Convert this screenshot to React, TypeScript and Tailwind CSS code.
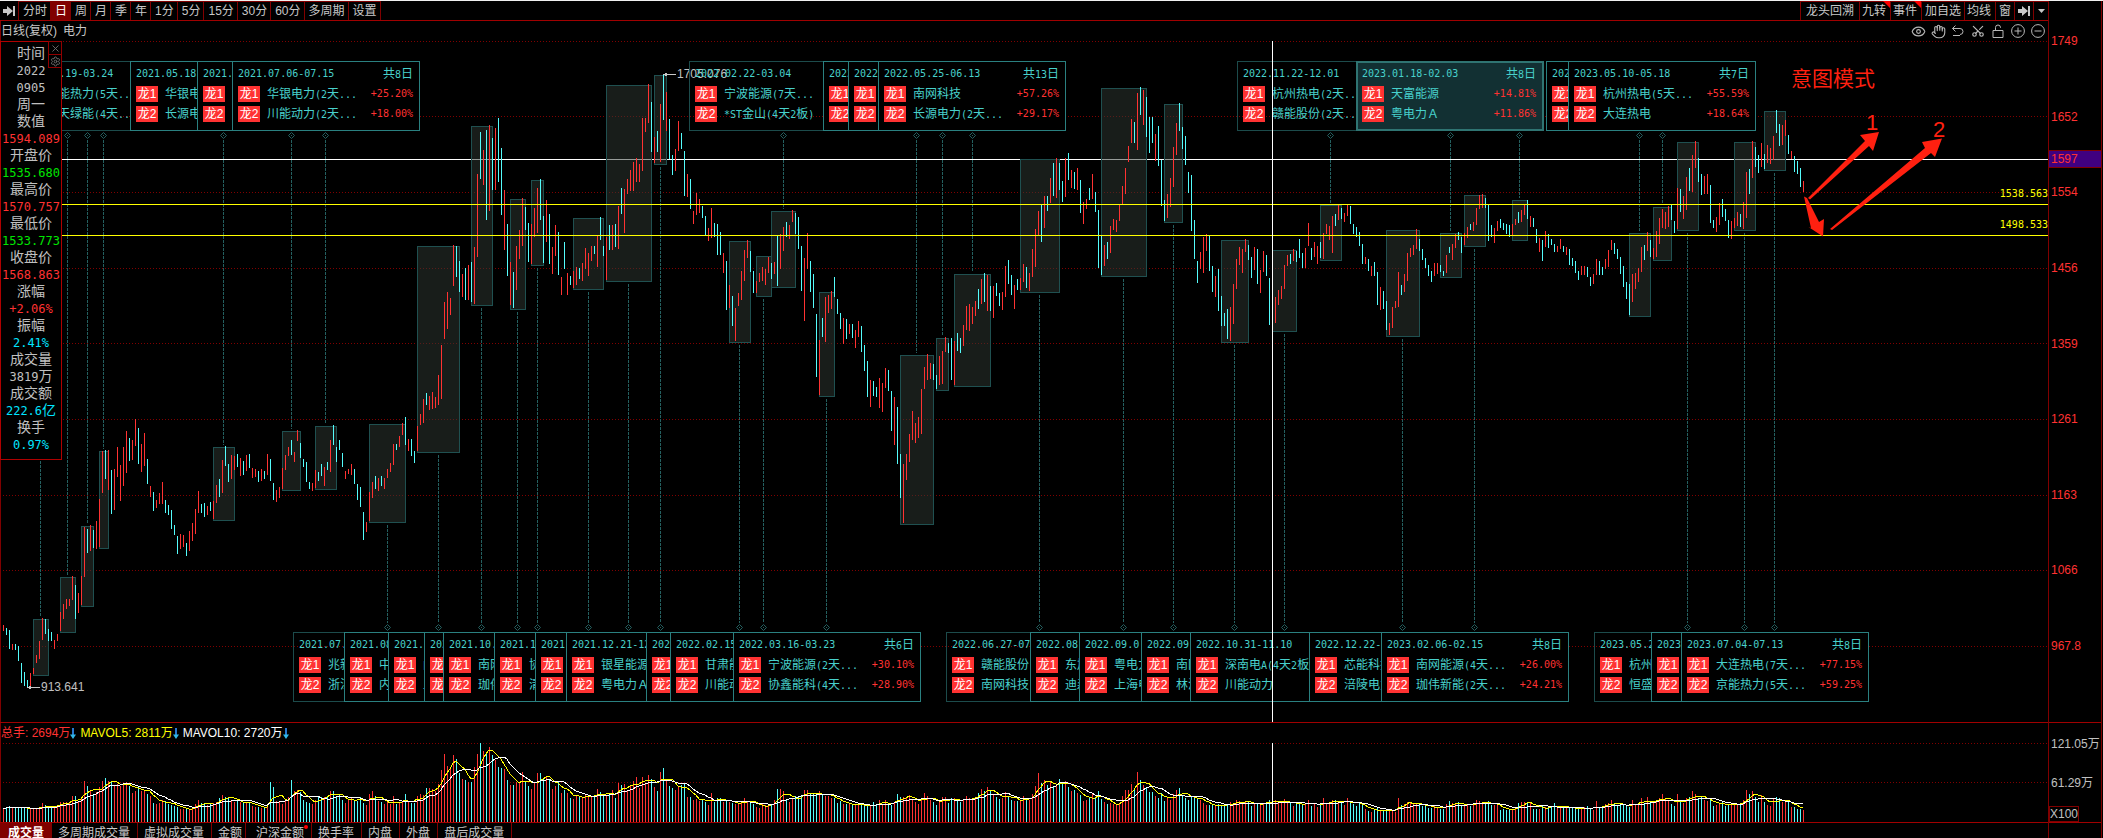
import { Eye, Hand, Scissors, X, Settings } from "lucide-react";

const RED = "#ff3232";
const CYAN = "#54fcfc";
const GRID = "#800000";
const TEAL = "#246060";

/* Vertical extent of each daily bar: r = up day, c = down day, then high-low. */
const BARS = `
r625-631 c628-635 c630-649 r644-650 c644-650 c646-661 c663-683 c672-686 c680-688 r673-687
r668-674 r655-663 r641-659 r618-640 c619-634 c629-641 c632-641 r640-649 r634-641 r612-631
r604-619 r599-609 r599-606 r576-600 c585-619 r593-613 r576-605 r527-577 c529-553 r525-551
c530-548 r521-549 r499-547 r451-493 c450-479 r450-490 c470-514 r469-510 r447-477 r465-501
r447-486 r431-473 c438-461 r440-460 r419-446 c428-464 r444-472 r433-466 c459-484 r486-497
c492-511 r500-508 r493-504 r482-504 c500-513 c505-515 c510-529 c525-535 c536-554 r534-549
r535-547 c543-556 r531-551 r523-541 r509-534 r491-513 c504-513 c503-517 r506-515 c502-511
r501-519 r485-503 c479-497 r460-493 c446-466 c464-482 r455-479 r456-470 c454-467 r458-476
c461-475 r455-471 c454-468 r468-478 r469-477 c471-482 r469-481 c471-479 r454-475 c459-481
c483-500 r490-502 r487-498 r468-489 r455-470 r447-456 c440-455 r452-462 r430-441 c443-458
c459-467 c462-482 c482-489 r483-491 r470-488 c472-481 c464-476 r467-486 c462-470 r440-472
c425-445 c447-462 c440-450 c453-467 r471-479 r469-474 r464-475 c469-484 c484-500 c487-507
c512-540 r522-532 r492-521 r482-498 c476-489 r478-491 c476-486 r478-489 r469-478 r463-472
r444-465 c444-450 r436-447 r423-435 c417-445 r439-451 c439-456 c451-463 r426-451 r414-425
r399-423 c393-405 r396-410 r392-409 r397-408 r375-405 r345-399 r302-339 r292-329 r298-315
r245-286 c246-277 c261-292 r274-297 c268-300 r265-300 c262-302 r247-304 r174-257 c132-179
r150-185 c130-220 r125-211 c138-190 r128-190 c118-182 c148-215 r190-250 c224-276 r262-305
c272-308 r246-290 r230-259 r198-246 c207-230 c223-262 r224-264 r208-237 r188-233 c179-220
c216-263 r200-242 c214-264 r247-274 r225-256 c232-275 r277-295 c242-269 r273-295 c276-285
r271-288 r267-285 c268-279 r263-281 r248-269 r253-276 r246-261 c246-254 r236-267 c217-240
c246-256 r237-280 c225-250 r225-250 c224-247 r206-249 c188-214 r189-233 r179-194 r170-191
r162-191 r158-182 r164-182 r118-171 r118-132 r84-123 c102-152 r137-163 c131-152 r104-162
c75-120 r92-131 c119-159 c155-175 r149-171 r121-151 c133-149 c151-196 r174-197 c179-209
r211-224 r193-215 r199-213 c206-218 c216-235 r228-241 r208-238 c223-237 c224-255 c232-255
r253-273 c261-310 r285-308 c296-326 r308-341 r293-306 r271-300 r250-281 r240-258 c251-272
c271-293 r281-293 r273-282 r267-281 r269-285 r257-273 c263-279 r262-274 c236-286 r234-269
r227-251 c222-237 r225-239 r210-222 c213-234 c217-249 c246-291 r258-321 r233-269 c261-292
c274-308 c314-377 r340-395 c318-337 r297-342 r295-313 r291-309 c277-297 c299-314 c313-329
r318-344 c319-339 r324-334 c324-338 r330-348 r321-337 c326-352 c345-371 c361-397 r380-407
c381-396 c387-397 r378-408 r383-412 r368-388 c370-391 c391-431 r397-445 c407-464 c454-498
r464-523 r454-480 r434-462 r411-440 r423-443 r417-438 r389-434 r367-389 r354-380 r363-379
c364-380 c375-389 r356-385 r351-384 r337-352 c343-353 c338-380 r341-385 c333-351 c338-353
r325-346 r306-330 r304-331 r307-324 r301-316 c289-309 r279-304 c273-302 r275-311 c286-311
r286-318 c283-296 c293-306 r292-310 r266-297 c260-284 c275-295 r285-309 c279-290 r278-290
r264-282 c267-288 r273-291 r249-277 r229-267 r211-235 c204-242 r196-228 c196-211 r178-203
c163-196 r158-198 c163-190 c181-202 r158-197 c153-180 r170-188 c172-189 r168-190 c180-213
r202-224 r199-209 c188-200 r174-199 c192-212 c210-268 c236-275 r245-266 c242-259 r226-253
r219-230 r220-232 r204-221 r186-205 r168-194 r146-162 r119-143 c122-143 r93-150 c87-115
r90-125 c97-137 c117-153 c117-143 r134-161 c126-166 c160-206 c200-221 r194-218 r178-207
r147-187 r123-155 c103-131 c127-149 c136-165 c172-193 c175-231 c220-259 c261-283 r252-269
r237-273 r234-251 c236-271 c266-292 r276-297 c269-311 c296-326 c313-326 c309-339 r307-341
r284-324 r259-289 r247-265 r249-273 r239-252 c245-260 c257-278 r247-270 c249-284 r270-293
r251-272 c255-276 c278-325 c315-330 r297-323 r290-305 r286-299 r265-289 r255-266 c254-264
r249-261 c251-262 c239-258 c253-268 r248-268 r223-246 c248-260 r242-257 r246-264 c242-258
r233-259 r224-234 r226-240 r216-253 c214-226 r205-220 c208-219 r213-222 r205-216 c206-224
c224-234 c227-237 c232-246 c244-264 r257-264 c259-271 r266-276 c262-276 c272-305 r287-310
c291-309 c301-330 r323-335 r307-328 r301-308 r272-307 c285-295 r274-292 r253-281 r248-257
r245-255 r229-249 c239-251 c249-260 c258-268 c265-276 c271-282 r263-276 r263-274 c265-272
c271-276 r255-273 c247-253 r244-260 r234-248 c232-240 c237-253 r233-245 r227-238 c224-230
r222-231 r208-225 r195-209 r194-208 c198-208 c204-241 c225-237 r228-243 r221-231 c219-228
c223-230 c224-234 c225-237 r224-235 r219-225 c212-223 r210-222 r204-215 c200-219 r216-227
c218-227 c229-243 r238-252 c240-261 r231-247 c234-248 c239-245 c244-252 r246-252 r239-249
c246-252 r247-255 c249-265 c258-266 c261-273 c271-280 r266-275 r266-275 c267-277 c277-286
r274-284 r259-275 c261-275 c267-275 r259-269 r250-267 r240-250 c243-254 c249-259 c257-274
c266-287 c282-299 c284-315 r274-302 r273-289 r268-282 r247-272 c245-260 r232-251 c240-257
r248-259 r231-257 r218-244 r209-228 r212-229 r206-227 c205-220 c221-233 r188-229 c189-212
r196-219 r177-210 c168-191 r155-192 r141-168 c158-182 c174-195 r176-194 r174-194 c185-223
c220-228 r217-232 r203-225 c199-217 c209-221 c220-238 r221-239 r218-228 r212-226 c214-227
r202-229 r172-218 c169-194 r141-178 c147-167 c155-173 r143-167 c154-169 r145-163 r148-164
r136-160 c110-133 c124-146 r125-145 r120-136 c135-154 r151-159 c156-172 c161-174 c168-187
r181-192`
  .trim()
  .split(/\s+/)
  .map((t, i) => {
    const [top, bottom] = t.slice(1).split("-").map(Number);
    return { x: 3 + i * 3, top, bottom, color: t[0] === "r" ? RED : CYAN };
  });

const VOLUMES = `
13 15 16 15 15 15 14 14 14 13 13 14 14 19 17 15 15 16 17 20
20 20 19 26 26 21 23 41 36 32 28 30 35 41 44 41 41 36 38 36
38 40 36 29 31 36 31 32 28 26 19 18 19 22 21 18 17 16 15 13
13 13 13 14 18 22 19 18 17 18 19 20 24 27 25 25 22 20 21 20
19 20 19 16 15 15 14 14 15 40 35 21 20 18 22 25 42 31 32 30
22 20 19 18 22 26 25 25 26 31 31 26 28 22 19 22 25 21 21 25
19 17 28 31 26 21 20 18 20 18 26 18 19 20 28 21 19 19 26 28
27 34 34 33 31 38 52 68 56 53 67 63 49 43 42 40 40 55 68 79
71 69 75 67 62 55 54 53 42 37 37 40 40 50 40 36 33 39 49 49
44 45 43 33 36 40 29 32 29 24 23 26 26 24 28 26 25 25 33 30
26 27 28 32 24 39 37 38 31 37 41 45 34 45 38 47 43 35 31 50
54 43 36 34 32 36 37 38 25 25 22 23 21 23 20 17 29 20 24 24
20 21 20 19 18 19 20 24 21 20 18 15 14 18 17 16 18 22 33 33
31 22 20 24 26 25 26 32 32 28 28 27 31 28 26 26 24 24 19 21
18 18 18 17 17 19 17 16 16 17 20 17 22 17 22 19 17 20 28 25
25 24 27 22 20 18 24 29 26 22 20 17 21 25 25 19 24 24 21 20
22 26 24 23 25 29 33 31 35 32 27 25 23 24 30 26 22 21 21 22
26 24 22 28 36 49 39 42 37 40 36 36 43 39 41 35 31 32 29 27
21 22 24 28 24 31 23 20 18 19 18 17 18 26 32 32 38 33 50 42
37 35 30 30 26 24 29 21 24 22 28 32 34 26 24 22 26 25 24 22
19 17 17 17 16 18 17 16 18 20 18 22 21 20 21 20 16 18 19 18
19 20 22 20 22 20 19 23 21 19 16 18 20 18 19 22 16 18 15 19
24 19 18 22 22 21 20 17 24 20 18 16 20 17 13 11 10 13 14 12
11 12 13 11 10 24 17 18 20 19 18 19 18 16 16 14 14 17 15 13
13 18 21 19 18 20 17 17 18 16 19 22 21 18 20 21 17 17 17 12
13 12 12 13 14 19 20 20 20 19 13 13 13 16 15 14 16 19 14 15
14 16 14 14 13 14 14 15 16 13 12 21 14 15 18 19 22 18 17 17
17 16 15 22 18 19 24 18 25 19 20 22 24 28 23 21 18 16 28 20
19 24 25 31 28 23 25 22 21 23 16 17 19 20 16 18 18 18 17 18
22 32 28 31 25 20 27 20 17 16 23 25 24 20 20 20 15 15 13 13 12`
  .trim()
  .split(/\s+/)
  .map(Number);

const VOLUME_BASE = 99;

function averageLine(days: number) {
  return BARS.map((bar, i) => {
    const part = VOLUMES.slice(Math.max(0, i - days + 1), i + 1);
    const mean = part.reduce((a, b) => a + b, 0) / Math.max(1, part.length);
    return `${bar.x},${Math.round(VOLUME_BASE - mean)}`;
  }).join(" ");
}

/* Highlighted runs: left, top, right, bottom. */
const RUNS = [
  [33, 619, 49, 676], [60, 577, 76, 633], [81, 526, 94, 607], [99, 451, 109, 549],
  [213, 447, 235, 521], [282, 431, 301, 491], [315, 426, 337, 490], [369, 424, 406, 523],
  [417, 246, 460, 453], [471, 126, 493, 306], [510, 199, 526, 310], [531, 180, 544, 266],
  [573, 218, 604, 290], [606, 85, 652, 282], [654, 75, 667, 165], [729, 241, 751, 343],
  [756, 256, 772, 297], [771, 211, 796, 288], [819, 292, 835, 397], [900, 355, 934, 525],
  [936, 338, 949, 391], [954, 274, 991, 387], [1020, 159, 1060, 293], [1101, 88, 1147, 277],
  [1164, 104, 1183, 223], [1221, 240, 1249, 343], [1272, 250, 1297, 332], [1320, 205, 1342, 261],
  [1386, 230, 1420, 337], [1440, 233, 1462, 278], [1464, 195, 1486, 247], [1512, 200, 1528, 241],
  [1629, 233, 1651, 317], [1653, 207, 1672, 261], [1677, 142, 1699, 231], [1734, 142, 1756, 231],
  [1764, 111, 1786, 171],
];

/* Leader lines: x and the edge of the run they point at. */
const LEADERS_UP = [
  [67, 575], [87, 524], [103, 449], [223, 445], [291, 429], [325, 424], [783, 209], [916, 353],
  [942, 336], [972, 272], [1330, 203], [1450, 231], [1519, 198], [1639, 231], [1662, 204],
];
const LEADERS_DOWN = [
  [387, 525], [438, 455], [481, 308], [517, 312], [537, 268], [588, 292], [628, 284], [660, 167],
  [739, 345], [763, 299], [826, 399], [1039, 295], [1123, 279], [1173, 225], [1234, 345],
  [1284, 334], [1402, 339], [1474, 249], [1687, 233], [1744, 233], [1774, 173],
];

const GRID_ROWS = [41, 116, 192, 268, 343, 419, 495, 570, 646];
const PRICES = ["1749", "1652", "1554", "1456", "1359", "1261", "1163", "1066", "967.8"];

type CardData = {
  x: number;
  date: string;
  a: string;
  b: string;
  days?: string;
  pa?: string;
  pb?: string;
  kind?: "first" | "active";
};

const TOP_CARDS: CardData[] = [
  { x: 11, date: "2021.03.19-03.24", a: "京能热力(5天...", b: "新天绿能(4天...", kind: "first" },
  { x: 130, date: "2021.05.18-", a: "华银电", b: "长源电" },
  { x: 197, date: "2021.", a: "", b: "" },
  { x: 232, date: "2021.07.06-07.15", days: "共8日", a: "华银电力(2天...", b: "川能动力(2天...", pa: "+25.20%", pb: "+18.00%" },
  { x: 689, date: "2022.02.22-03.04", a: "宁波能源(7天...", b: "*ST金山(4天2板)", kind: "first" },
  { x: 823, date: "2022", a: "", b: "" },
  { x: 848, date: "2022", a: "", b: "" },
  { x: 878, date: "2022.05.25-06.13", days: "共13日", a: "南网科技", b: "长源电力(2天...", pa: "+57.26%", pb: "+29.17%" },
  { x: 1237, date: "2022.11.22-12.01", a: "杭州热电(2天..", b: "赣能股份(2天..", kind: "first" },
  { x: 1546, date: "2023", a: "", b: "" },
  { x: 1356, date: "2023.01.18-02.03", days: "共8日", a: "天富能源", b: "粤电力Ａ", pa: "+14.81%", pb: "+11.86%", kind: "active" },
  { x: 1568, date: "2023.05.10-05.18", days: "共7日", a: "杭州热电(5天...", b: "大连热电", pa: "+55.59%", pb: "+18.64%" },
];

const BOTTOM_CARDS: CardData[] = [
  { x: 293, date: "2021.07.", a: "兆新", b: "浙江", kind: "first" },
  { x: 344, date: "2021.08", a: "中", b: "内" },
  { x: 388, date: "2021.", a: "闽", b: "上" },
  { x: 424, date: "2021", a: "", b: "" },
  { x: 443, date: "2021.10.", a: "南网", b: "珈伟" },
  { x: 494, date: "2021.1", a: "协", b: "清" },
  { x: 535, date: "2021", a: "", b: "" },
  { x: 566, date: "2021.12.21-12", a: "银星能源", b: "粤电力Ａ" },
  { x: 646, date: "2022", a: "", b: "" },
  { x: 670, date: "2022.02.15", a: "甘肃能", b: "川能动" },
  { x: 733, date: "2022.03.16-03.23", days: "共6日", a: "宁波能源(2天...", b: "协鑫能科(4天...", pa: "+30.10%", pb: "+28.90%" },
  { x: 946, date: "2022.06.27-07", a: "赣能股份", b: "南网科技", kind: "first" },
  { x: 1030, date: "2022.08", a: "东旭", b: "迪森" },
  { x: 1079, date: "2022.09.0", a: "粤电力", b: "上海电" },
  { x: 1141, date: "2022.09", a: "南网", b: "林洋" },
  { x: 1190, date: "2022.10.31-11.10", a: "深南电A(4天2板", b: "川能动力" },
  { x: 1309, date: "2022.12.22-", a: "芯能科技", b: "涪陵电力" },
  { x: 1381, date: "2023.02.06-02.15", days: "共8日", a: "南网能源(4天...", b: "珈伟新能(2天...", pa: "+26.00%", pb: "+24.21%" },
  { x: 1594, date: "2023.05.2", a: "杭州", b: "恒盛", kind: "first" },
  { x: 1651, date: "2023", a: "", b: "" },
  { x: 1681, date: "2023.07.04-07.13", days: "共8日", a: "大连热电(7天...", b: "京能热力(5天...", pa: "+77.15%", pb: "+59.25%" },
];

/* Chinese text with its Latin parts set in a narrow fixed-width face. */
function Mixed({ text }: { text: string }) {
  return (
    <>
      {text.split(/([\x20-\x7e]+)/).map((part, i) =>
        i % 2 ? (
          <span key={i} className="font-['DejaVu_Sans_Mono',monospace] text-[10px]">{part}</span>
        ) : (
          part
        ),
      )}
    </>
  );
}

function CardRow({ tag, name, gain }: { tag: string; name: string; gain?: string }) {
  return (
    <div className="mt-1 flex h-4 items-center leading-4">
      <span className="h-4 w-[22px] shrink-0 bg-[#ff3232] text-center text-xs leading-4 text-white">{tag}</span>
      <span className="ml-[7px] flex-1"><Mixed text={name} /></span>
      {gain && <span className="font-['DejaVu_Sans_Mono',monospace] text-[10px] text-[#ff3232]">{gain}</span>}
    </div>
  );
}

const CARD_KIND = {
  first: "border border-[#1c4b4b] pt-1 pl-[5px]",
  plain: "border border-[#2a8080] bg-black pt-1 pl-[5px]",
  active: "border-2 border-[#2f7472] bg-[#123033] pt-[3px] pl-1",
};

function Card({ card }: { card: CardData }) {
  return (
    <article
      className={`absolute h-[70px] w-[188px] overflow-hidden pr-1.5 text-xs whitespace-nowrap text-[#48d1cc] ${CARD_KIND[card.kind ?? "plain"]}`}
      style={{ left: card.x }}
    >
      <div className="flex h-4 items-center justify-between leading-4">
        <span className="font-['DejaVu_Sans_Mono',monospace] text-[10px]">{card.date}</span>
        {card.days && <span><Mixed text={card.days} /></span>}
      </div>
      <CardRow tag="龙1" name={card.a} gain={card.pa} />
      <CardRow tag="龙2" name={card.b} gain={card.pb} />
    </article>
  );
}

const READINGS: [string, string][] = [
  ["时间", "g"], ["2022", "g"], ["0905", "g"], ["周一", "g"], ["数值", "g"], ["1594.089", "r"],
  ["开盘价", "g"], ["1535.680", "d"], ["最高价", "g"], ["1570.757", "r"], ["最低价", "g"],
  ["1533.773", "d"], ["收盘价", "g"], ["1568.863", "r"], ["涨幅", "g"], ["+2.06%", "r"],
  ["振幅", "g"], ["2.41%", "c"], ["成交量", "g"], ["3819万", "g"], ["成交额", "g"],
  ["222.6亿", "c"], ["换手", "g"], ["0.97%", "c"],
];
const READING_COLOR: Record<string, string> = {
  g: "text-[#c0c0c0]",
  r: "text-[#ff3232]",
  d: "text-[#00e600]",
  c: "text-[#00e4ff]",
};

function ReadingPanel() {
  return (
    <aside className="absolute top-5 left-0 w-[62px] border border-[#b00000] bg-black pt-[3px] pb-1.5 text-center">
      {READINGS.map(([text, tone], i) => (
        <div key={i} className={`h-[17px] text-sm leading-[17px] whitespace-nowrap ${READING_COLOR[tone]}`}>
          {text.split(/([\x20-\x7e]+)/).map((p, j) =>
            j % 2 ? <span key={j} className="font-['DejaVu_Sans_Mono',monospace] text-xs leading-[17px]">{p}</span> : p,
          )}
        </div>
      ))}
      <div className="absolute -top-px -right-px flex flex-col">
        <button aria-label="关闭" className="flex size-[14px] items-center justify-center border border-[#900000] bg-black text-[#707070]">
          <X size={11} strokeWidth={2} />
        </button>
        <button aria-label="设置指标" className="-mt-px flex size-[14px] items-center justify-center border border-[#900000] bg-black text-[#707070]">
          <Settings size={11} strokeWidth={2} />
        </button>
      </div>
    </aside>
  );
}

function JumpIcon() {
  return (
    <svg width="12" height="12" viewBox="0 0 12 12" fill="#c8c8c8" aria-hidden="true">
      <path d="M0 4h4V1l6 5-6 5V8H0z" />
      <path d="M10 1h2v10h-2z" />
    </svg>
  );
}

const PERIODS = ["分时", "日", "周", "月", "季", "年", "1分", "5分", "15分", "30分", "60分", "多周期", "设置"];
const ACTIONS = ["龙头回溯", "九转", "事件", "加自选", "均线", "窗"];

function Toolbar() {
  return (
    <header className="flex h-5 shrink-0 justify-between border-b border-[#a00000] text-xs text-[#c8c8c8]">
      <nav className="flex">
        <button aria-label="跳到最新" className="flex w-[19px] items-center justify-end border-r border-[#800000] pr-[3px]"><JumpIcon /></button>
        {PERIODS.map((p) => (
          <button
            key={p}
            className={`border-t border-r border-[#800000] pr-[3px] pl-1 leading-[19px] ${p === "日" ? "bg-[#800000] text-white" : ""}`}
          >
            {p}
          </button>
        ))}
      </nav>
      <nav className="flex">
        {ACTIONS.map((a) => (
          <button
            key={a}
            className={`relative border-t border-l border-[#800000] leading-[19px] ${a === "龙头回溯" ? "pr-[5px] pl-[5px]" : a.length === 2 ? "pr-1 pl-0.5" : "pr-[3px] pl-[3px]"}`}
          >
            {a}
            {(a === "九转" || a === "事件") && (
              <svg className="absolute -top-px right-0" width="7" height="7" aria-hidden="true"><path d="M0 0h7v7z" fill="#ff0000" /></svg>
            )}
          </button>
        ))}
        <button aria-label="跳到末尾" className="flex w-[19px] items-center justify-center border-t border-l border-[#800000]"><JumpIcon /></button>
        <button aria-label="更多" className="flex w-[15px] items-center justify-center border-t border-l border-[#800000]">
          <svg width="7" height="4" aria-hidden="true"><path d="M0 0h7L3.5 4z" fill="#c8c8c8" /></svg>
        </button>
      </nav>
    </header>
  );
}

const line = { fill: "none", stroke: "currentColor", strokeWidth: 1 };

function ToolIcons() {
  const cell = "flex w-5 items-center justify-center";
  return (
    <div className="flex h-5 text-[#b8b8b8]">
      <button aria-label="显示" className={cell}><Eye size={15} strokeWidth={1.8} /></button>
      <button aria-label="拖动" className={cell}><Hand size={15} strokeWidth={1.8} /></button>
      <button aria-label="撤销" className={cell}>
        <svg width="14" height="14" {...line}><path d="M4.500 1.500L1.500 4.500l3 3M1.500 4.500h7.500q3 0 3 3t-3 3M2 11.500h7" /></svg>
      </button>
      <button aria-label="裁剪" className={cell}><Scissors size={14} strokeWidth={2} className="-rotate-90" /></button>
      <button aria-label="锁定" className={cell}>
        <svg width="14" height="14" {...line}><path d="M2 6.500h10v7H2zM4.500 6.500V3.500q0-2.500 2.500-2.500T9.500 3.500V4" /></svg>
      </button>
      <button aria-label="放大" className={cell}>
        <svg width="14" height="14" {...line}><circle cx="7" cy="7" r="6.400" /><path d="M3.500 7h7M7 3.500v7" /></svg>
      </button>
      <button aria-label="缩小" className={cell}>
        <svg width="14" height="14" {...line}><circle cx="7" cy="7" r="6.400" /><path d="M3.500 7h7" /></svg>
      </button>
    </div>
  );
}

function Leader({ x, from, to, tip }: { x: number; from: number; to: number; tip: number }) {
  return (
    <g stroke={TEAL}>
      <path d={`M${x + 0.5} ${from}V${to}`} strokeDasharray="3 1" />
      <path d={`M${x + 0.5} ${tip - 2.5}l3 3l-3 3l-3-3z`} fill="none" shapeRendering="auto" />
      <path d={`M${x} ${tip + 0.5}h1`} />
    </g>
  );
}

function PriceDrawing() {
  return (
    <svg className="absolute inset-0 size-full" shapeRendering="crispEdges" role="img" aria-label="日线走势">
      <g transform="translate(0 -21)">
        {GRID_ROWS.map((y) => (
          <line key={y} x1="3" x2="100%" y1={y + 0.5} y2={y + 0.5} stroke={GRID} strokeDasharray="1 2" />
        ))}
        <line x1="62" x2="100%" y1="159.5" y2="159.5" stroke="#ffffff" />
        {LEADERS_UP.map(([x, y]) => <Leader key={x} x={x} from={140} to={y} tip={135} />)}
        {LEADERS_DOWN.map(([x, y]) => <Leader key={x} x={x} from={y} to={623} tip={627} />)}
        <path d="M40.500 461V617" stroke={TEAL} strokeDasharray="3 1" />
        {RUNS.map(([x, y, r, b]) => (
          <rect key={`${x}-${y}`} x={x + 0.5} y={y + 0.5} width={r - x - 1} height={b - y - 1} fill="rgba(48,58,52,0.5)" stroke="#1f5050" />
        ))}
        {BARS.map((b) => (
          <rect key={b.x} x={b.x} y={b.top} width="1" height={b.bottom - b.top} fill={b.color} />
        ))}
        <path d="M0 204.500H4000M0 235.500H4000" stroke="#ffff00" />
        <g stroke="#c8c8c8" fill="#c8c8c8">
          <path d="M664 74.500h12M28 687.500h12" />
          <path d="M663 74.500l4-2v4zM27 687.500l4-2v4z" stroke="none" />
        </g>
        <g fill="#c0c0c0" fontSize="12" fontFamily="'Liberation Sans', sans-serif">
          <text x="677" y="78">1705.076</text>
          <text x="41" y="691">913.641</text>
        </g>
      </g>
    </svg>
  );
}

function Markup() {
  return (
    <svg className="pointer-events-none absolute inset-0 size-full" aria-hidden="true">
      <g transform="translate(0 -21)">
        <path d="M1272.500 41V723" stroke="#ffffff" />
        <g fill="#ff2010">
          <path d="M1808 198L1865 141L1860 135L1879 132L1873 151L1869 146L1810 199.500Z" />
          <path d="M1830 229L1925 148L1922 142L1942 138.500L1935 157L1931 153L1832 230Z" />
          <path d="M1804 196.500L1811 228L1808.500 227L1823 236.500L1824 219L1819 222L1807 198Z" />
        </g>
      </g>
    </svg>
  );
}

function PricePane() {
  return (
    <section className="relative min-h-0 flex-1 overflow-hidden border-b border-[#a00000]">
      <PriceDrawing />
      <div className="relative flex h-5 items-center justify-between">
        <h1 className="flex gap-1.5 pl-px text-xs leading-5 text-[#c8c8c8]"><span>日线(复权)</span><span>电力</span></h1>
        <ToolIcons />
      </div>
      <div className="absolute top-[40px] left-0">{TOP_CARDS.map((c) => <Card key={c.x} card={c} />)}</div>
      <div className="absolute top-[611px] left-0">{BOTTOM_CARDS.map((c) => <Card key={c.x} card={c} />)}</div>
      <ReadingPanel />
      <Markup />
      <p className="absolute top-[43px] left-[1791px] text-[21px] leading-[30px] text-[#ff2010]">意图模式</p>
      <p className="absolute top-[89px] left-[1866px] text-[22px] leading-[26px] text-[#ff2010]">1</p>
      <p className="absolute top-[96px] left-[1933px] text-[22px] leading-[26px] text-[#ff2010]">2</p>
      <p className="absolute top-[166px] right-0 font-['DejaVu_Sans_Mono',monospace] text-[10px] leading-[14px] text-[#ffff00]">1538.563</p>
      <p className="absolute top-[197px] right-0 font-['DejaVu_Sans_Mono',monospace] text-[10px] leading-[14px] text-[#ffff00]">1498.533</p>
    </section>
  );
}

function DownArrow() {
  return (
    <svg width="6" height="12" viewBox="0 0 6 12" className="inline-block" aria-hidden="true">
      <path d="M3 1v9" stroke="#2878d0" strokeWidth="2" />
      <path d="M0 7.500h6L3 12z" fill="#30b8e8" />
    </svg>
  );
}

function VolumePane() {
  return (
    <section className="relative h-[100px] shrink-0 border-b border-[#a00000]">
      <svg className="absolute inset-0 size-full" shapeRendering="crispEdges" role="img" aria-label="成交量">
        <line x1="3" x2="100%" y1="20.500" y2="20.500" stroke={GRID} strokeDasharray="1 2" />
        <line x1="3" x2="100%" y1="59.500" y2="59.500" stroke={GRID} strokeDasharray="1 2" />
        {BARS.map((b, i) => (
          <rect key={b.x} x={b.x} y={VOLUME_BASE - (VOLUMES[i] ?? 0)} width="1" height={VOLUMES[i] ?? 0} fill={b.color} />
        ))}
        <polyline points={averageLine(5)} fill="none" stroke="#ffff00" />
        <polyline points={averageLine(10)} fill="none" stroke="#ffffff" />
        <path d="M1272.500 20V99" stroke="#ffffff" />
      </svg>
      <div className="relative flex gap-1 pl-px text-xs leading-5">
        <span className="flex items-center text-[#ff3232]">总手: 2694万<DownArrow /></span>
        <span className="flex items-center text-[#ffff00]">MAVOL5: 2811万<DownArrow /></span>
        <span className="flex items-center text-white">MAVOL10: 2720万<DownArrow /></span>
      </div>
    </section>
  );
}

const TABS = ["成交量", "多周期成交量", "虚拟成交量", "金额", "沪深金额", "换手率", "内盘", "外盘", "盘后成交量"];
const TAB_SPACING: Record<string, string> = {
  成交量: "bg-[#800000] px-2 font-bold text-white",
  金额: "border-r pr-[3px] pl-1.5",
  沪深金额: "border-r pr-[7px] pl-2.5",
};

function Tabs() {
  return (
    <nav className="flex h-[15px] shrink-0 overflow-hidden text-xs leading-5 text-[#c8c8c8]">
      {TABS.map((t) => (
        <button key={t} className={`relative h-5 border-[#800000] leading-5 ${TAB_SPACING[t] ?? "border-r pr-[7px] pl-1.5"}`}>
          {t}
          {t === "沪深金额" && <span className="absolute top-0.5 right-[3px] size-1 rounded-full bg-[#ff0000]" />}
        </button>
      ))}
    </nav>
  );
}

function ScaleColumn() {
  return (
    <div className="mr-px flex w-[54px] shrink-0 flex-col border-r border-l border-[#800000] text-xs">
      <div className="relative flex flex-1 flex-col justify-between border-b border-[#a00000] pt-8 pb-[68px] pl-0.5 leading-4 text-[#ff3232]">
        {PRICES.map((p) => <span key={p}>{p}</span>)}
        <span className="absolute top-[149px] left-0 h-[18px] w-full border-y border-[#800000] bg-[#400080] pl-0.5">1597</span>
      </div>
      <div className="relative flex h-[100px] flex-col border-b border-[#a00000] pt-[13px] pl-0.5 leading-4 whitespace-nowrap text-[#c0c0c0]">
        <span>121.05万</span>
        <span className="mt-[23px]">61.29万</span>
        <span className="mt-auto -ml-0.5 w-[30px] border border-[#800000] text-center leading-[14px]">X100</span>
      </div>
      <div className="h-[15px]" />
    </div>
  );
}

export default function App() {
  return (
    <main className="flex h-screen overflow-hidden border-t border-[#f0f0f0] bg-black font-['Liberation_Sans','Noto_Sans_CJK_SC',sans-serif]">
      <div className="flex min-w-0 flex-1 flex-col">
        <Toolbar />
        <div className="flex min-h-0 flex-1 flex-col border-l border-[#800000] [&>section]:-ml-px">
          <PricePane />
          <VolumePane />
        </div>
        <Tabs />
      </div>
      <ScaleColumn />
    </main>
  );
}
